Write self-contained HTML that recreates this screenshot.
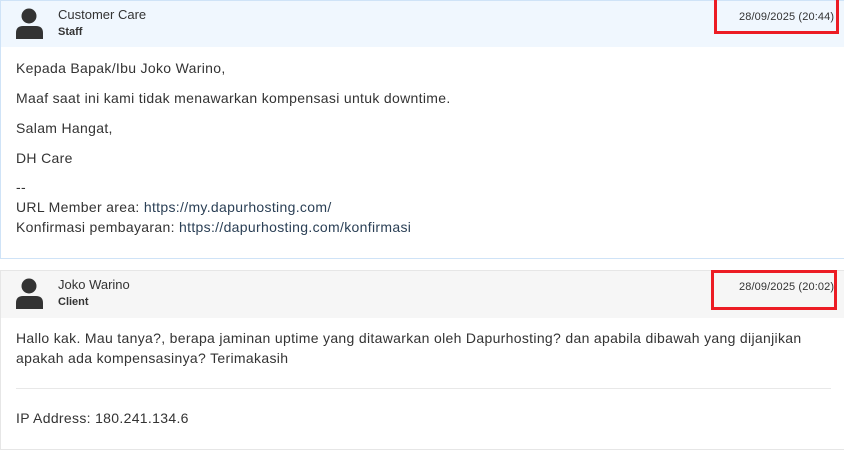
<!DOCTYPE html>
<html><head><style>
body{margin:0;width:844px;height:443px;overflow:hidden;background:#fff;font-family:"Liberation Sans",sans-serif;color:#333;position:relative}
.a{position:absolute;white-space:nowrap}
.box1{position:absolute;left:0;top:0;width:846px;height:259px;border:1px solid #cfe3f7;box-sizing:border-box}
.h1{position:absolute;left:1px;top:1px;width:845px;height:46px;background:#f0f7fe}
.box2{position:absolute;left:0;top:270px;width:846px;height:180px;border:1px solid #e6e6e6;box-sizing:border-box}
.h2{position:absolute;left:1px;top:271px;width:845px;height:47px;background:#f6f6f6}
.t{font-size:14px;color:#333;letter-spacing:0.32px}
.d{font-size:11px;letter-spacing:0.12px}
.red{position:absolute;border:3px solid #ec1c24;box-sizing:border-box}
</style></head><body>
<div class="box1"></div><div class="h1"></div>
<div class="box2"></div><div class="h2"></div>
<svg class="a" style="left:15px;top:7px" width="30" height="32" viewBox="0 0 30 32"><circle cx="14" cy="9" r="7.5" fill="#333"/><path d="M1 32 V26 Q1 19 8 19 H21 Q28 19 28 26 V32Z" fill="#333"/></svg>
<svg class="a" style="left:15px;top:277px" width="30" height="32" viewBox="0 0 30 32"><circle cx="14" cy="9" r="7.5" fill="#333"/><path d="M1 32 V26 Q1 19 8 19 H21 Q28 19 28 26 V32Z" fill="#333"/></svg>
<div class="a" style="left:58px;top:7px;font-size:13px">Customer Care</div>
<div class="a" style="left:58px;top:26px;font-size:11px;font-weight:bold">Staff</div>
<div class="a d" style="left:739px;top:11px">28/09/2025 (20:44)</div>
<div class="red" style="left:714px;top:-3px;width:125px;height:37px"></div>
<div class="a t" style="left:16px;top:60px">Kepada Bapak/Ibu Joko Warino,</div>
<div class="a t" style="left:16px;top:90px">Maaf saat ini kami tidak menawarkan kompensasi untuk downtime.</div>
<div class="a t" style="left:16px;top:120px">Salam Hangat,</div>
<div class="a t" style="left:16px;top:150px">DH Care</div>
<div class="a t" style="left:16px;top:179px">--</div>
<div class="a t" style="left:16px;top:199px">URL Member area: <span style="color:#2a3f55">https://my.dapurhosting.com/</span></div>
<div class="a t" style="left:16px;top:219px">Konfirmasi pembayaran: <span style="color:#2a3f55">https://dapurhosting.com/konfirmasi</span></div>
<div class="a" style="left:58px;top:277px;font-size:13px">Joko Warino</div>
<div class="a" style="left:58px;top:296px;font-size:11px;font-weight:bold">Client</div>
<div class="a d" style="left:739px;top:281px">28/09/2025 (20:02)</div>
<div class="red" style="left:711px;top:270px;width:126px;height:40px"></div>
<div class="a t" style="left:16px;top:330px">Hallo kak. Mau tanya?, berapa jaminan uptime yang ditawarkan oleh Dapurhosting? dan apabila dibawah yang dijanjikan</div>
<div class="a t" style="left:16px;top:350px">apakah ada kompensasinya? Terimakasih</div>
<div class="a" style="left:16px;top:388px;width:815px;height:1px;background:#e8e8e8"></div>
<div class="a t" style="left:16px;top:410px">IP Address: 180.241.134.6</div>
</body></html>
